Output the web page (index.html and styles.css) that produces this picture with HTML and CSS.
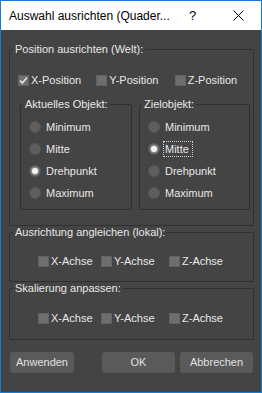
FILE: index.html
```html
<!DOCTYPE html>
<html lang="de">
<head>
<meta charset="utf-8">
<title>Auswahl ausrichten</title>
<link rel="stylesheet" href="styles.css">
</head>
<body>
<div class="win">
  <div class="titlebar">
    <div class="title">Auswahl ausrichten (Quader...</div>
    <div class="capbtn help">?</div>
    <div class="capbtn close">
      <svg width="11" height="11" viewBox="0 0 11 11"><path d="M0.5 0.5L10.5 10.5M10.5 0.5L0.5 10.5" stroke="#000" stroke-width="1" fill="none"/></svg>
    </div>
  </div>
  <div class="content">
    <fieldset class="grp g1">
      <legend>Position ausrichten (Welt):</legend>
      <div class="cbrow pos">
        <label class="cb"><span class="box checked"><svg width="11" height="11" viewBox="0 0 11 11"><path d="M2 5.5L4.3 8L9 2.5" stroke="#e4e4e4" stroke-width="1.6" fill="none"/></svg></span><span>X-Position</span></label>
        <label class="cb"><span class="box"></span><span>Y-Position</span></label>
        <label class="cb"><span class="box"></span><span>Z-Position</span></label>
      </div>
      <div class="inner">
        <fieldset class="grp sub">
          <legend>Aktuelles Objekt:</legend>
          <div class="rb"><span class="radio"></span><span>Minimum</span></div>
          <div class="rb"><span class="radio"></span><span>Mitte</span></div>
          <div class="rb"><span class="radio on"></span><span>Drehpunkt</span></div>
          <div class="rb"><span class="radio"></span><span>Maximum</span></div>
        </fieldset>
        <fieldset class="grp sub">
          <legend>Zielobjekt:</legend>
          <div class="rb"><span class="radio"></span><span>Minimum</span></div>
          <div class="rb"><span class="radio on"></span><span class="focus">Mitte</span></div>
          <div class="rb"><span class="radio"></span><span>Drehpunkt</span></div>
          <div class="rb"><span class="radio"></span><span>Maximum</span></div>
        </fieldset>
      </div>
    </fieldset>
    <fieldset class="grp g2">
      <legend>Ausrichtung angleichen (lokal):</legend>
      <div class="cbrow axes">
        <label class="cb"><span class="box"></span><span>X-Achse</span></label>
        <label class="cb"><span class="box"></span><span>Y-Achse</span></label>
        <label class="cb"><span class="box"></span><span>Z-Achse</span></label>
      </div>
    </fieldset>
    <fieldset class="grp g3">
      <legend>Skalierung anpassen:</legend>
      <div class="cbrow axes">
        <label class="cb"><span class="box"></span><span>X-Achse</span></label>
        <label class="cb"><span class="box"></span><span>Y-Achse</span></label>
        <label class="cb"><span class="box"></span><span>Z-Achse</span></label>
      </div>
    </fieldset>
    <div class="buttons">
      <div class="btn apply">Anwenden</div>
      <div class="btn ok">OK</div>
      <div class="btn cancel">Abbrechen</div>
    </div>
  </div>
</div>
</body>
</html>
```

FILE: styles.css
```css
html, body {
  margin: 0;
  padding: 0;
  background: #444444;
}
body {
  font-family: "Liberation Sans", Arial, sans-serif;
  font-size: 11px;
  color: #e8e8e8;
}
.win {
  box-sizing: border-box;
  width: 262px;
  height: 393px;
  border: 1px solid #1b7bd3;
  display: flex;
  flex-direction: column;
  background: #444444;
}
.titlebar {
  height: 29px;
  background: #ffffff;
  display: flex;
  align-items: center;
  color: #000;
  flex: none;
}
.title {
  flex: 1;
  padding-left: 8px;
  font-size: 12px;
  white-space: nowrap;
  padding-top: 1px;
}
.capbtn {
  width: 46px;
  height: 29px;
  display: flex;
  align-items: center;
  justify-content: center;
  font-size: 13px;
}
.content {
  flex: 1;
  padding: 13px 7px 0 8px;
}
fieldset.grp {
  margin: 0;
  padding: 0;
  border: 1px solid #303030;
  border-radius: 2px;
  min-width: 0;
}
fieldset.grp > legend {
  padding: 0 2px;
  margin-left: 3px;
  line-height: 12px;
  height: 12px;
  font-size: 11px;
  color: #e8e8e8;
}
.g1 {
  padding-bottom: 15px !important;
}
.cbrow {
  display: flex;
  height: 11px;
  line-height: 11px;
}
.cbrow.pos {
  margin-top: 20px;
  padding-left: 8px;
}
.cbrow.pos .cb {
  width: 79px;
}
.cb {
  display: flex;
  align-items: center;
  gap: 2px;
  white-space: nowrap;
}
.box {
  width: 11px;
  height: 11px;
  box-sizing: border-box;
  background: #6e6e6e;
  border: 1px solid #626262;
  display: block;
}
.box svg {
  display: block;
  margin: -1px;
}
.inner {
  display: grid;
  grid-template-columns: 112px 111px;
  column-gap: 7px;
  margin-top: 12px;
  padding-left: 10px;
}
fieldset.sub {
  padding: 6px 0 5px 0;
}
fieldset.sub > legend {
  margin-left: 2px;
}
.rb {
  display: flex;
  align-items: center;
  height: 22px;
  padding-left: 8px;
  white-space: nowrap;
}
.radio {
  width: 12px;
  height: 12px;
  box-sizing: border-box;
  border-radius: 50%;
  background: #5e5e5e;
  border: 1px solid #555555;
  margin-right: 5px;
  flex: none;
  display: flex;
  align-items: center;
  justify-content: center;
}
.radio.on::after {
  content: "";
  width: 6px;
  height: 6px;
  border-radius: 50%;
  background: #f4f4f4;
  box-shadow: 0 0 2px 1px rgba(230, 230, 230, 0.5);
}
.focus {
  outline: 1px dotted #cfcfcf;
  outline-offset: 1px;
  line-height: 12px;
  padding-right: 2px;
}
.g2 {
  margin-top: 6px;
  padding: 18px 0 14px 0 !important;
}
.g3 {
  margin-top: 4px;
  padding: 19px 0 15px 0 !important;
}
.cbrow.axes {
  display: grid;
  grid-template-columns: 63px 68px auto;
  padding-left: 28px;
}
.buttons {
  display: flex;
  margin-top: 12px;
  padding: 0 1px;
}
.btn {
  height: 21px;
  line-height: 21px;
  text-align: center;
  background: #5a5a5a;
  border-radius: 3px;
  color: #e0e0e0;
  font-size: 11px;
}
.apply {
  width: 64px;
}
.ok {
  width: 73px;
  margin-left: auto;
}
.cancel {
  width: 73px;
  margin-left: 5px;
}
```
